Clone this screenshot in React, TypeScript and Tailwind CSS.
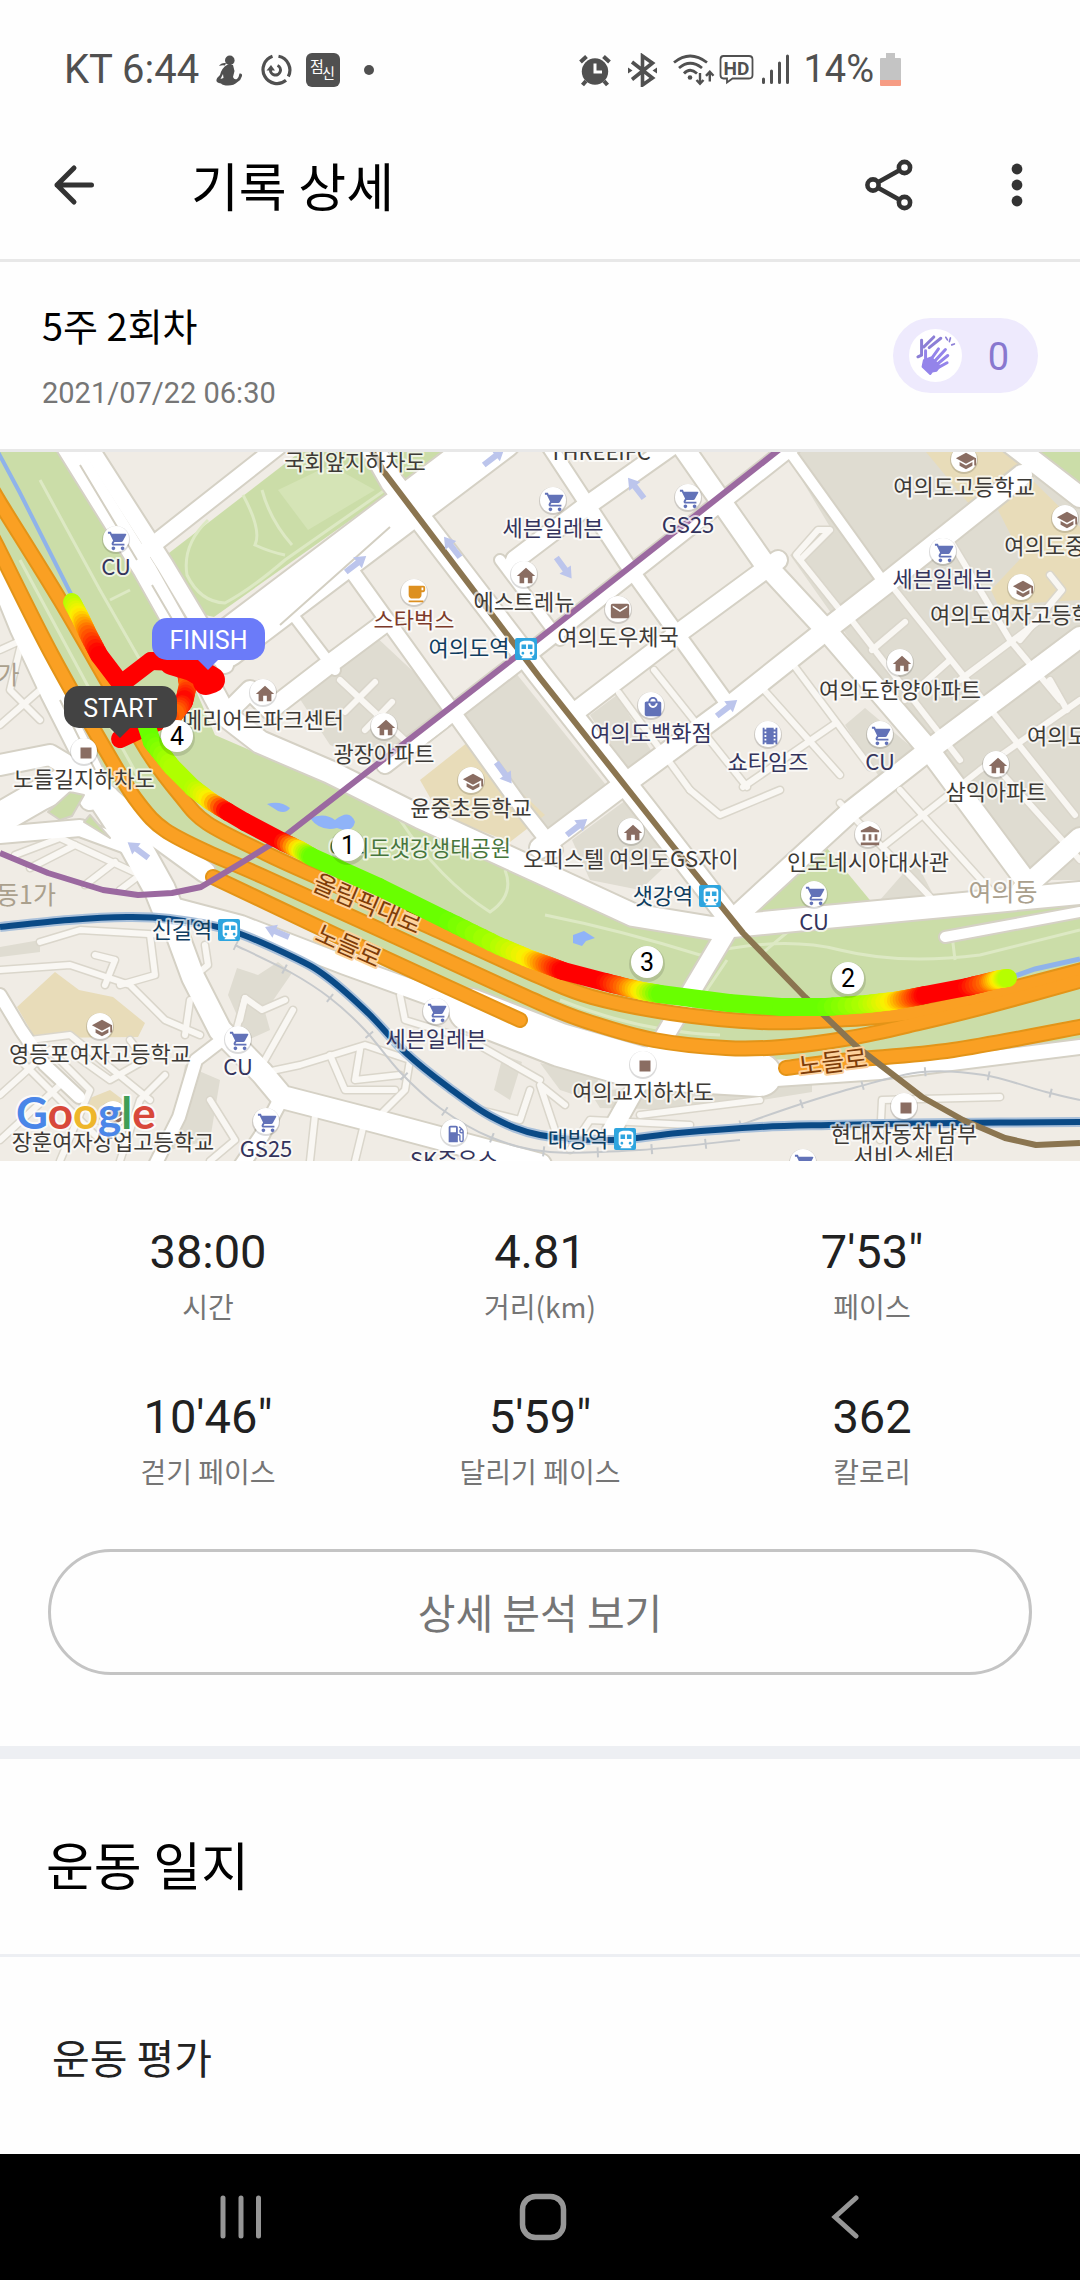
import type { ComponentType } from "react";
import {
  MdAccountBalance,
  MdDirectionsTransit,
  MdHome,
  MdLocalCafe,
  MdLocalGasStation,
  MdLocalMall,
  MdMail,
  MdSchool,
  MdShoppingCart,
  MdStop,
  MdTheaters,
} from "react-icons/md";

type Pt = [number, number];
type IconType = ComponentType<Record<string, unknown>>;

const pts = (p: Pt[]) => p.map((q) => q.join(",")).join(" ");

/* Smooth path through the given points (Catmull-Rom). */
function curve(p: Pt[]) {
  let d = `M${p[0][0]} ${p[0][1]}`;
  for (let i = 0; i < p.length - 1; i++) {
    const a = p[Math.max(i - 1, 0)];
    const b = p[i];
    const c = p[i + 1];
    const e = p[Math.min(i + 2, p.length - 1)];
    d += ` C${b[0] + (c[0] - a[0]) / 6} ${b[1] + (c[1] - a[1]) / 6} ${c[0] - (e[0] - b[0]) / 6} ${c[1] - (e[1] - b[1]) / 6} ${c[0]} ${c[1]}`;
  }
  return d;
}

/* ---------- map data ---------- */

const GREENS: Pt[][] = [
  [[0, 452], [62, 452], [150, 600], [185, 665], [215, 735], [330, 785], [540, 885], [633, 927], [712, 940], [815, 930], [1080, 905], [1080, 1040], [940, 1055], [760, 1060], [600, 1035], [420, 985], [205, 875], [110, 790], [0, 580]],
  [[169, 553], [300, 452], [441, 452], [393, 490], [214, 617], [196, 613], [172, 580]],
  [[747, 913], [826, 847], [874, 905]],
  [[1040, 452], [1080, 452], [1080, 482]],
];

/* Small lawns enclosed by the junction ramps. */
const LAWNS: Pt[][] = [
  [[48, 812], [70, 792], [84, 795], [72, 816], [60, 820]],
  [[90, 815], [110, 838], [84, 822]],
];

const GRAYS: Pt[][] = [
  [[785, 452], [1080, 452], [1080, 880], [1030, 880], [935, 760], [790, 555], [830, 527]],
  [[296, 693], [372, 633], [451, 707], [380, 765], [330, 745]],
  [[462, 716], [515, 672], [610, 790], [555, 840], [495, 760]],
  [[590, 715], [617, 695], [660, 765], [628, 775]],
  [[845, 725], [865, 708], [915, 750], [880, 778]],
  [[572, 840], [626, 800], [672, 860], [640, 890], [590, 880]],
  [[880, 900], [915, 860], [936, 900]],
  [[228, 995], [237, 968], [258, 975], [278, 962], [292, 973], [265, 1012], [270, 1030], [248, 1040]],
  [[0, 947], [40, 940], [40, 952], [0, 957]],
  [[590, 1092], [812, 1070], [812, 1092], [700, 1110], [600, 1108]],
  [[494, 1090], [503, 1055], [522, 1062], [510, 1100]],
  [[185, 1065], [220, 1080], [210, 1140], [170, 1150]],
  [[540, 1063], [600, 1075], [590, 1100], [560, 1090]],
];

const SANDS: Pt[][] = [
  [[926, 452], [1024, 452], [1022, 463], [970, 505]],
  [[998, 510], [1029, 477], [1080, 527], [1080, 600], [998, 605], [991, 590], [1022, 557]],
  [[420, 780], [468, 742], [545, 815], [510, 842], [440, 815]],
  [[17, 1007], [55, 972], [79, 990], [113, 997], [145, 1023], [138, 1037], [35, 1038]],
  [[85, 1100], [110, 1090], [130, 1105], [120, 1125], [95, 1125]],
];

const MINOR: Pt[][] = [
  [[654, 670], [747, 787]],
  [[619, 693], [690, 790]],
  [[764, 690], [840, 775]],
  [[795, 667], [870, 767]],
  [[850, 618], [960, 760]],
  [[895, 590], [1075, 815]],
  [[950, 540], [1010, 640], [1060, 700]],
  [[743, 787], [836, 723]],
  [[872, 650], [905, 622]],
  [[905, 700], [950, 660]],
  [[840, 803], [936, 903]],
  [[900, 790], [990, 890]],
  [[690, 790], [720, 815], [780, 790]],
  [[885, 845], [980, 770], [1080, 700]],
  [[960, 680], [1040, 620]],
  [[1050, 680], [1067, 710]],
  [[990, 760], [1080, 860]],
  [[800, 560], [830, 530], [818, 530], [796, 555], [840, 610]],
  [[340, 680], [410, 745]],
  [[365, 730], [392, 702]],
  [[345, 712], [375, 682]],
  [[385, 770], [445, 725]],
  [[1050, 575], [1062, 590], [1020, 640]],
  [[40, 942], [80, 930], [165, 935]],
  [[0, 970], [70, 965], [130, 985], [165, 1020], [200, 1035]],
  [[105, 985], [115, 960], [95, 955]],
  [[150, 935], [155, 975], [120, 985]],
  [[205, 945], [208, 965], [190, 980]],
  [[185, 1035], [190, 1000]],
  [[0, 1095], [50, 1050], [90, 1090], [60, 1161]],
  [[30, 1040], [70, 1035], [150, 1100]],
  [[0, 1140], [60, 1085]],
  [[75, 1055], [110, 1080], [145, 1060], [130, 1040]],
  [[20, 1060], [100, 1140]],
  [[120, 1161], [140, 1100], [165, 1075]],
  [[235, 1035], [245, 998], [262, 1010], [285, 1000]],
  [[245, 998], [240, 1020]],
  [[262, 1065], [293, 1010]],
  [[262, 1073], [300, 1065], [365, 1045], [410, 1060], [405, 1090], [380, 1115]],
  [[330, 1055], [345, 1090], [395, 1090]],
  [[360, 1050], [355, 1080], [400, 1075]],
  [[210, 1100], [235, 1140], [210, 1161]],
  [[355, 1161], [365, 1120]],
  [[310, 1161], [315, 1115]],
  [[400, 995], [405, 1020], [470, 1040], [540, 1080]],
  [[480, 1110], [520, 1120], [530, 1090]],
  [[565, 1105], [540, 1085], [555, 1130]],
  [[640, 1115], [760, 1100]],
  [[570, 1150], [590, 1120], [690, 1125]],
  [[880, 1140], [882, 1100], [1000, 1097]],
  [[15, 855], [60, 838], [140, 875], [120, 890]],
  [[30, 868], [75, 845]],
  [[85, 885], [115, 862]],
  [[0, 650], [22, 640], [10, 690], [40, 720]],
  [[0, 725], [40, 690]],
];

const ROADS: { w: number; p: Pt[] }[] = [
  { w: 22, p: [[64, 440], [145, 570], [190, 650], [225, 715], [260, 742], [330, 772], [420, 817], [540, 872], [633, 915], [712, 928], [815, 918], [1080, 893]] },
  { w: 16, p: [[85, 440], [165, 565], [225, 665]] },
  { w: 16, p: [[140, 555], [290, 437]] },
  { w: 44, p: [[225, 645], [410, 505], [500, 437]] },
  { w: 18, p: [[225, 715], [250, 690], [270, 710], [331, 663], [386, 622]] },
  { w: 10, p: [[293, 615], [335, 670]] },
  { w: 14, p: [[351, 570], [525, 812], [555, 850]] },
  { w: 18, p: [[515, 560], [585, 507], [670, 447]] },
  { w: 16, p: [[385, 765], [540, 645], [800, 440]] },
  { w: 18, p: [[575, 712], [680, 632], [778, 560]] },
  { w: 20, p: [[540, 848], [626, 783], [729, 707], [826, 630], [884, 585], [1022, 475]] },
  { w: 20, p: [[729, 923], [850, 812], [929, 750], [1080, 637]] },
  { w: 22, p: [[372, 447], [392, 482], [540, 675], [646, 810], [735, 925]] },
  { w: 14, p: [[545, 440], [626, 563], [730, 707]] },
  { w: 10, p: [[500, 560], [560, 640]] },
  { w: 20, p: [[678, 440], [764, 563], [826, 630], [929, 750], [1029, 885]] },
  { w: 10, p: [[790, 452], [884, 583]] },
  { w: 20, p: [[1000, 435], [1080, 497]] },
  { w: 20, p: [[1022, 890], [1080, 838]] },
  { w: 10, p: [[945, 937], [1080, 912]] },
  { w: 18, p: [[726, 933], [664, 1037], [612, 1130]] },
  { w: 22, p: [[0, 575], [21, 627], [52, 693], [86, 760], [105, 800], [135, 840]] },
  { w: 30, p: [[105, 800], [135, 845], [160, 890], [172, 920]] },
  { w: 22, p: [[172, 920], [193, 977], [220, 1030], [262, 1073], [282, 1097], [379, 1122], [540, 1165]] },
  { w: 20, p: [[0, 765], [50, 755], [75, 770], [90, 800]] },
  { w: 30, p: [[0, 818], [40, 795], [80, 775]] },
  { w: 16, p: [[0, 835], [80, 828], [140, 850]] },
  { w: 20, p: [[100, 790], [150, 832], [205, 872]] },
  { w: 18, p: [[165, 905], [241, 925], [345, 965], [470, 1010]] },
  { w: 42, p: [[470, 1010], [560, 1045], [640, 1068], [760, 1075]] },
  { w: 14, p: [[760, 1080], [880, 1072], [1080, 1047]] },
  { w: 12, p: [[150, 1175], [179, 1117], [196, 1060], [222, 1040]] },
  { w: 12, p: [[0, 995], [21, 1030], [45, 1065], [79, 1097]] },
  { w: 14, p: [[235, 1175], [262, 1135], [282, 1097]] },
];

const HIGHWAYS: Pt[][] = [
  [[-10, 485], [0, 503], [60, 600], [114, 693], [150, 755], [180, 795], [207, 823], [265, 853], [313, 875], [430, 927], [540, 977], [592, 997], [671, 1013], [760, 1022], [833, 1020], [919, 1012], [1005, 990], [1090, 968]],
  [[-10, 533], [0, 552], [52, 655], [115, 766], [140, 805], [165, 830], [207, 852], [262, 876], [396, 937], [540, 1003], [592, 1023], [654, 1040], [726, 1048], [781, 1047], [850, 1038], [919, 1023], [988, 1006], [1090, 978]],
  [[213, 877], [310, 923], [389, 960], [520, 1020]],
  [[786, 1068], [850, 1060], [953, 1050], [1090, 1025]],
];

const BLUE_LINE: Pt[] = [[0, 927], [69, 920], [127, 917], [170, 919], [229, 930], [293, 957], [327, 977], [368, 1013], [406, 1053], [448, 1087], [492, 1117], [540, 1135], [612, 1140], [678, 1133], [760, 1127], [829, 1125], [953, 1123], [1080, 1122]];
const PURPLE_LINE: Pt[] = [[790, 441], [540, 638], [286, 835], [241, 863], [201, 887], [172, 893], [138, 895], [103, 890], [48, 873], [0, 853]];
const BROWN_LINE: Pt[] = [[370, 447], [384, 472], [540, 678], [672, 845], [743, 933], [805, 997], [857, 1047], [922, 1097], [963, 1120], [1005, 1138], [1036, 1145], [1080, 1143]];
const RAIL: Pt[] = [[740, 1125], [798, 1105], [857, 1087], [922, 1072], [984, 1075], [1046, 1092], [1080, 1100]];
const RAIL_SOUTH: Pt[] = [[235, 945], [290, 972], [330, 998], [365, 1030], [400, 1072], [440, 1108], [490, 1137], [550, 1152], [640, 1150], [740, 1140]];

const SLOW = [255, 0, 0];
const WARM = [255, 110, 0];
const MID = [255, 240, 0];
const QUICK = [175, 255, 0];
const FAST = [105, 255, 0];

type Track = { p: Pt; c: number[] }[];
const TRACKS: Track[] = [
  [
    { p: [186, 672], c: SLOW },
    { p: [188, 685], c: WARM },
    { p: [184, 702], c: SLOW },
    { p: [174, 715], c: WARM },
    { p: [150, 725], c: SLOW },
    { p: [120, 739], c: SLOW },
  ],
  [
    { p: [72, 602], c: QUICK },
    { p: [80, 617], c: MID },
    { p: [88, 634], c: WARM },
    { p: [99, 655], c: SLOW },
    { p: [121, 684], c: SLOW },
    { p: [151, 661], c: SLOW },
    { p: [179, 662], c: SLOW },
    { p: [213, 680], c: SLOW },
    { p: [205, 678], c: SLOW },
  ],
  [
    { p: [146, 724], c: FAST },
    { p: [152, 742], c: FAST },
    { p: [172, 767], c: QUICK },
    { p: [193, 788], c: QUICK },
    { p: [210, 801], c: MID },
    { p: [228, 812], c: SLOW },
    { p: [245, 822], c: SLOW },
    { p: [283, 842], c: SLOW },
    { p: [300, 850], c: MID },
    { p: [312, 857], c: FAST },
    { p: [379, 887], c: FAST },
    { p: [448, 921], c: FAST },
    { p: [499, 946], c: QUICK },
    { p: [530, 959], c: MID },
    { p: [547, 965], c: WARM },
    { p: [563, 971], c: SLOW },
    { p: [605, 982], c: SLOW },
    { p: [625, 987], c: WARM },
    { p: [642, 991], c: MID },
    { p: [660, 994], c: FAST },
    { p: [729, 1003], c: FAST },
    { p: [781, 1007], c: FAST },
    { p: [826, 1007], c: FAST },
    { p: [867, 1004], c: QUICK },
    { p: [893, 1001], c: MID },
    { p: [910, 998], c: WARM },
    { p: [925, 995], c: SLOW },
    { p: [967, 987], c: SLOW },
    { p: [988, 982], c: WARM },
    { p: [1000, 979], c: MID },
    { p: [1008, 978], c: QUICK },
  ],
];

const ARROWS: { at: Pt; deg: number }[] = [
  { at: [356, 564], deg: -38 },
  { at: [452, 547], deg: -128 },
  { at: [494, 457], deg: -38 },
  { at: [636, 488], deg: -128 },
  { at: [564, 568], deg: 54 },
  { at: [504, 773], deg: 54 },
  { at: [727, 708], deg: -38 },
  { at: [577, 827], deg: -38 },
  { at: [138, 850], deg: -143 },
  { at: [277, 932], deg: -157 },
];

const SHOP = "#6272b8";
const PLACE = "#8a6d62";
const INK = "#3d3a36";
const SHOP_INK = "#33335c";

type Poi = { icon?: IconType; fill: string; at: Pt; text?: string; ink?: string };
const cart = (x: number, y: number, text?: string): Poi => ({ icon: MdShoppingCart as IconType, fill: SHOP, at: [x, y], text, ink: SHOP_INK });
const place = (icon: unknown, x: number, y: number, text: string): Poi => ({ icon: icon as IconType, fill: PLACE, at: [x, y], text, ink: INK });

const POIS: Poi[] = [
  cart(116, 539, "CU"),
  cart(553, 500, "세븐일레븐"),
  cart(688, 497, "GS25"),
  { icon: MdLocalCafe as IconType, fill: "#dd9020", at: [414, 592], text: "스타벅스", ink: "#7c3a2a" },
  place(MdHome, 524, 574, "에스트레뉴"),
  place(MdMail, 618, 609, "여의도우체국"),
  place(MdHome, 263, 692, "메리어트파크센터"),
  place(MdHome, 384, 726, "광장아파트"),
  place(MdSchool, 471, 780, "윤중초등학교"),
  place(MdStop, 84, 751, "노들길지하차도"),
  place(MdHome, 631, 831, "오피스텔 여의도GS자이"),
  { icon: MdLocalMall as IconType, fill: SHOP, at: [651, 705], text: "여의도백화점", ink: SHOP_INK },
  { icon: MdTheaters as IconType, fill: SHOP, at: [768, 734], text: "쇼타임즈", ink: SHOP_INK },
  cart(880, 734, "CU"),
  place(MdHome, 900, 662, "여의도한양아파트"),
  place(MdHome, 996, 764, "삼익아파트"),
  place(MdSchool, 964, 459, "여의도고등학교"),
  place(MdSchool, 1065, 518, "여의도중학교"),
  cart(943, 551, "세븐일레븐"),
  place(MdSchool, 1021, 587, "여의도여자고등학교"),
  place(MdAccountBalance, 868, 834, "인도네시아대사관"),
  cart(814, 894, "CU"),
  place(MdStop, 643, 1064, "여의교지하차도"),
  place(MdStop, 904, 1106, "현대자동차 남부"),
  cart(803, 1162),
  cart(436, 1011, "세븐일레븐"),
  cart(238, 1039, "CU"),
  cart(266, 1121, "GS25"),
  { icon: MdLocalGasStation as IconType, fill: SHOP, at: [454, 1132], text: "SK주유소", ink: SHOP_INK },
  place(MdSchool, 100, 1026, "영등포여자고등학교"),
  place(MdSchool, 113, 1114, "장훈여자상업고등학교"),
];

const STATIONS: { label: string; text: Pt; at: Pt }[] = [
  { label: "여의도역", text: [469, 656], at: [526, 649] },
  { label: "샛강역", text: [663, 904], at: [710, 896] },
  { label: "대방역", text: [578, 1147], at: [625, 1139] },
  { label: "신길역", text: [182, 938], at: [229, 930] },
];

const KM: { n: number; at: Pt }[] = [
  { n: 4, at: [177, 736] },
  { n: 1, at: [348, 845] },
  { n: 3, at: [647, 962] },
  { n: 2, at: [848, 978] },
];

/* ---------- map drawing ---------- */

function TrackLine({ track }: { track: Track }) {
  const parts: { a: Pt; b: Pt; color: string }[] = [];
  for (let i = 0; i < track.length - 1; i++) {
    const s = track[i];
    const e = track[i + 1];
    const n = s.c === e.c ? 1 : 6;
    for (let k = 0; k < n; k++) {
      const at = (t: number): Pt => [s.p[0] + (e.p[0] - s.p[0]) * t, s.p[1] + (e.p[1] - s.p[1]) * t];
      const m = (k + 0.5) / n;
      const rgb = s.c.map((v, j) => Math.round(v + (e.c[j] - v) * m));
      parts.push({ a: at(k / n), b: at((k + 1) / n), color: `rgb(${rgb.join(",")})` });
    }
  }
  return (
    <g strokeWidth="18" strokeLinecap="round">
      {parts.map((q, i) => (
        <line key={i} x1={q.a[0]} y1={q.a[1]} x2={q.b[0]} y2={q.b[1]} stroke={q.color} />
      ))}
    </g>
  );
}

function MapLabel({ x, y, ink, anchor = "middle", children }: { x: number; y: number; ink: string; anchor?: "middle" | "start"; children: string }) {
  return (
    <text x={x} y={y} textAnchor={anchor} fill={ink} stroke="#ffffff" strokeOpacity="0.7" strokeWidth="4" strokeLinejoin="round" paintOrder="stroke">
      {children}
    </text>
  );
}

function RoadName({ x, y, deg, children }: { x: number; y: number; deg: number; children: string }) {
  return (
    <text x={x} y={y} transform={`rotate(${deg} ${x} ${y})`} textAnchor="middle" fontSize="25" fill="#7f3d08" stroke="#fdd29c" strokeWidth="4" strokeLinejoin="round" paintOrder="stroke">
      {children}
    </text>
  );
}

function Callout({ x, y, w, fill, tip, children }: { x: number; y: number; w: number; fill: string; tip: number; children: string }) {
  return (
    <g>
      <rect x={x} y={y} width={w} height="42" rx="15" fill={fill} />
      <path d={`M${tip - 11} ${y + 41} L${tip} ${y + 52} L${tip + 11} ${y + 41} Z`} fill={fill} />
      <text x={x + w / 2} y={y + 31} textAnchor="middle" fontSize="25" fill="#fff">
        {children}
      </text>
    </g>
  );
}

function RouteMap() {
  return (
    <svg viewBox="0 452 1080 709" className="block w-full" role="img" aria-label="운동 경로 지도" fontFamily="'Noto Sans CJK KR', sans-serif" fontSize="22">
      <rect x="0" y="452" width="1080" height="709" fill="#f0ece5" />
      {GRAYS.map((p, i) => (
        <polygon key={i} points={pts(p)} fill="#dfdcd1" />
      ))}
      {SANDS.map((p, i) => (
        <polygon key={i} points={pts(p)} fill="#e8dcb9" />
      ))}
      {GREENS.map((p, i) => (
        <polygon key={i} points={pts(p)} fill="#cbdda8" />
      ))}

      <g fill="none" stroke="#dde9c4" strokeWidth="3">
        <path d="M208 520 Q182 545 187 575 Q200 602 225 603 Q250 590 285 560 L385 490" />
        <path d="M243 495 Q262 530 255 545 Q270 552 285 555 M262 490 Q270 520 292 545" />
        <path d="M40 480 L100 590 L140 660 M110 600 L130 590" />
        <path d="M20 560 L90 690 L140 780 M400 820 Q440 880 490 912 Q515 895 505 870" />
        <path d="M545 915 Q620 930 700 955 Q780 935 840 950 Q900 965 980 955 L1080 930" />
        <path d="M727 960 L700 1000 M760 955 L790 930 M952 935 L955 960" />
        <path d="M560 1000 Q640 1032 720 1035" />
      </g>
      <polygon points="278,490 330,465 375,490 308,530" fill="#d5e4b6" />
      <g fill="#8fb3f8">
        <path d="M267 804 Q280 800 290 808 Q286 814 278 811 Z" />
        <path d="M310 818 Q325 812 335 820 Q350 808 355 822 Q352 834 337 828 Q320 832 310 818 Z" />
        <path d="M573 935 L584 931 L595 938 L586 941 L582 946 L573 943 Z" />
      </g>
      <path d="M-2 452 L20 493 L74 600" stroke="#8fb3ea" strokeWidth="4" fill="none" />
      <path d="M1012 977 L1035 969 L1080 959" stroke="#8fb3ea" strokeWidth="5" fill="none" />

      <g fill="none" strokeLinejoin="round" strokeLinecap="round">
        <g stroke="#dad6cb" strokeWidth="9">
          {MINOR.map((p, i) => (
            <polyline key={i} points={pts(p)} />
          ))}
        </g>
        {ROADS.map((r, i) => (
          <polyline key={i} points={pts(r.p)} stroke="#d5d1c5" strokeWidth={r.w + 4} />
        ))}
        <g stroke="#f9f7f3" strokeWidth="6">
          {MINOR.map((p, i) => (
            <polyline key={i} points={pts(p)} />
          ))}
        </g>
        {ROADS.map((r, i) => (
          <polyline key={i} points={pts(r.p)} stroke="#ffffff" strokeWidth={r.w} />
        ))}
      </g>
      {LAWNS.map((p, i) => (
        <polygon key={i} points={pts(p)} fill="#cbdda8" stroke="#d5d1c5" strokeWidth="2" strokeLinejoin="round" />
      ))}
      <g stroke="#d3cfc2" strokeWidth="2" fill="none">
        <path d="M80 465 L137 560 M152 585 L190 650 M280 625 L390 527 M60 700 L95 770" />
      </g>

      <g fill="none" stroke="#c6c9cc">
        <path d={curve(RAIL)} strokeWidth="2" />
        <path d={curve(RAIL)} strokeWidth="9" strokeDasharray="2 62" />
        <path d={curve(RAIL_SOUTH)} strokeWidth="2" />
        <path d={curve(RAIL_SOUTH)} strokeWidth="10" strokeDasharray="2 52" />
      </g>

      <g fill="none" strokeLinecap="round">
        {HIGHWAYS.map((p, i) => (
          <path key={i} d={curve(p)} stroke="#e39418" strokeWidth="16" />
        ))}
        {HIGHWAYS.map((p, i) => (
          <path key={i} d={curve(p)} stroke="#faa023" strokeWidth="12" />
        ))}
      </g>

      <path d={curve(BLUE_LINE)} fill="none" stroke="#a9c0da" strokeWidth="10" />
      <path d={curve(BLUE_LINE)} fill="none" stroke="#0a4a86" strokeWidth="6" />
      <polyline points={pts(PURPLE_LINE)} fill="none" stroke="#9b69a0" strokeWidth="6" strokeLinejoin="round" />
      <polyline points={pts(BROWN_LINE)} fill="none" stroke="#8b7550" strokeWidth="6" strokeLinejoin="round" />

      {ARROWS.map((a, i) => (
        <path key={i} d="M-13 -3 H2 V-7 L13 0 L2 7 V3 H-13 Z" fill="#bcc5ec" transform={`translate(${a.at[0]} ${a.at[1]}) rotate(${a.deg})`} />
      ))}

      <RoadName x={364} y={912} deg={23}>올림픽대로</RoadName>
      <RoadName x={345} y={954} deg={24}>노들로</RoadName>
      <RoadName x={834} y={1071} deg={-7}>노들로</RoadName>

      <g fontSize="25" fill="#aaa08d">
        <text x="8" y="684" textAnchor="middle">가</text>
        <text x="26" y="904" textAnchor="middle">동1가</text>
        <text x="1003" y="901" textAnchor="middle" stroke="#fff" strokeWidth="4" strokeOpacity="0.8" paintOrder="stroke">여의동</text>
      </g>

      {POIS.map((p, i) => {
        const Icon = p.icon!;
        return (
          <g key={i}>
            <circle cx={p.at[0]} cy={p.at[1] + 1} r="14" fill="#000" opacity="0.14" />
            <circle cx={p.at[0]} cy={p.at[1]} r="13" fill="#fff" />
            <Icon x={p.at[0] - 9} y={p.at[1] - 9} width={18} height={18} color={p.fill} />
          </g>
        );
      })}
      {POIS.filter((p) => p.text).map((p, i) => (
        <MapLabel key={i} x={p.at[0]} y={p.at[1] + 36} ink={p.ink!}>
          {p.text!}
        </MapLabel>
      ))}
      <MapLabel x={904} y={1164} ink={INK}>서비스센터</MapLabel>
      <MapLabel x={355} y={470} ink={INK}>국회앞지하차도</MapLabel>
      <MapLabel x={600} y={460} ink={INK}>THREEIFC</MapLabel>
      <MapLabel x={1027} y={744} ink={INK} anchor="start">여의도</MapLabel>
      <MapLabel x={420} y={856} ink="#47763c">여의도샛강생태공원</MapLabel>

      {STATIONS.map((s) => (
        <g key={s.label}>
          <MapLabel x={s.text[0]} y={s.text[1]} ink="#0f3d5f">
            {s.label}
          </MapLabel>
          <rect x={s.at[0] - 11} y={s.at[1] - 11} width="22" height="22" rx="2" fill="#2ea5df" />
          <MdDirectionsTransit x={s.at[0] - 10} y={s.at[1] - 10} width={20} height={20} color="#fff" />
        </g>
      ))}

      {TRACKS.map((t, i) => (
        <TrackLine key={i} track={t} />
      ))}
      <path d="M172 662 L192 668 L212 680 L206 682" fill="none" stroke="#ff0000" strokeWidth="26" strokeLinecap="round" strokeLinejoin="round" />

      <g fontFamily="Roboto, sans-serif">
        {KM.map((k) => (
          <g key={k.n}>
            <circle cx={k.at[0]} cy={k.at[1] + 2} r="18" fill="#000" opacity="0.12" />
            <circle cx={k.at[0]} cy={k.at[1]} r="16" fill="#fff" />
            <text x={k.at[0]} y={k.at[1] + 9} textAnchor="middle" fontSize="25" fill="#000">
              {k.n}
            </text>
          </g>
        ))}
        <Callout x={64} y={686} w={113} fill="#434343" tip={120}>START</Callout>
        <Callout x={152} y={618} w={113} fill="#6b7bf9" tip={208}>FINISH</Callout>
      </g>

      <text x="16" y="1129" fontFamily="Lato, sans-serif" fontWeight="700" fontSize="44" stroke="#fff" strokeWidth="4" strokeOpacity="0.8" strokeLinejoin="round" paintOrder="stroke">
        <tspan fill="#4a86e8">G</tspan>
        <tspan fill="#d8483b">o</tspan>
        <tspan fill="#eeb62b">o</tspan>
        <tspan fill="#4a86e8">g</tspan>
        <tspan fill="#3f9e57">l</tspan>
        <tspan fill="#d8483b">e</tspan>
      </text>
    </svg>
  );
}

/* ---------- status bar ---------- */

function StatusBar() {
  return (
    <div className="flex items-center justify-between pt-11 pr-[178px] pb-4 pl-16 font-[Roboto,sans-serif] text-[40px] leading-[51px] text-[#505050]">
      <div className="flex items-center">
        <span>KT 6:44</span>
        <svg viewBox="217 53 28 32" className="ml-4 h-8 w-7" fill="currentColor" aria-hidden="true">
          <circle cx="231.8" cy="59.4" r="4.8" />
          <path d="M229 64 H235 L236.5 70 L235 76 Q236 79 239 78 Q241 76 241.5 72.5 Q244.5 72 244 75 Q243 79 239.5 81 Q236 84.5 230 84.5 Q225 84.5 223 82.5 Q218 81.5 218.4 79 Q219 76.500 222 74 Q224 66.500 229 64 Z" />
          <path d="M225 73 L222.500 78 L225.500 77 Z" fill="#fff" />
          <path d="M221 65 Q223 61.500 228 62 L227 64.500 Q224 64 221 65 Z" />
        </svg>
        <svg viewBox="261 52 33 34" className="ml-4 h-[34px] w-[33px]" fill="none" stroke="currentColor" aria-hidden="true">
          <path d="M274.500 55.300 A14 14 0 1 0 288 79.300 M280.500 55.300 A14 14 0 0 1 290.300 75.500" strokeWidth="3.200" />
          <path d="M279.500 64.500 A5 5 0 1 1 272.500 68.500" strokeWidth="3" />
          <path d="M268.500 69.500 L273 64 L277 69.500 Z" fill="currentColor" stroke="none" />
        </svg>
        <svg viewBox="0 0 34 34" className="ml-3.5 h-[34px] w-[34px]" aria-hidden="true">
          <rect width="34" height="34" rx="6" fill="currentColor" />
          <text x="4" y="19" fontFamily="'Noto Sans CJK KR', sans-serif" fontSize="15" fill="#fff">점</text>
          <text x="16" y="25" fontFamily="'Noto Sans CJK KR', sans-serif" fontSize="14" fill="#fff">신</text>
        </svg>
        <span className="ml-6 size-2.5 rounded-full bg-current" />
      </div>

      <div className="flex items-center">
        <svg viewBox="580 52 32 34" className="h-[34px] w-8" fill="none" stroke="currentColor" strokeWidth="4" aria-hidden="true">
          <circle cx="596" cy="70.500" r="13.200" fill="currentColor" stroke="none" />
          <path d="M581.500 61 L587.500 55.500 M610.500 61 L604.500 55.500" />
          <path d="M587 80 L583.500 84 M605 80 L608.500 84" />
          <path d="M596 62.500 V71 H603" stroke="#fff" strokeWidth="3" />
        </svg>
        <svg viewBox="627 52 31 34" className="ml-4 h-[34px] w-[31px]" fill="none" stroke="currentColor" strokeWidth="3.600" aria-hidden="true">
          <path d="M632 61 L652.500 77 L642.500 84 V55 L652.500 62 L632 78.500" />
          <path d="M628 66.500 L632.500 69.500 L628 72.500 Z M657 66.500 L652.500 69.500 L657 72.500 Z" fill="currentColor" stroke="none" />
        </svg>
        <svg viewBox="671 52 43 34" className="ml-3.5 h-[34px] w-[43px]" fill="none" stroke="currentColor" strokeWidth="2.800" aria-hidden="true">
          <path d="M673 61.500 Q689 48.500 706 61.500 M678 67 Q689 57.500 701 67 M683 72.500 Q689 66 696 72.500" />
          <circle cx="689" cy="76.500" r="2.300" fill="currentColor" stroke="none" />
          <path d="M699 72 V82 M695.500 79 L699 82.800 L702.500 79 M708.800 80.500 V71 M705 74.800 L708.800 70.800 L712.500 74.800" strokeWidth="2.400" />
        </svg>
        <svg viewBox="718 55 36 31" className="ml-1 h-[31px] w-9" aria-hidden="true">
          <path d="M722.500 57 H748 Q751.500 57 751.500 60.500 V76 Q751.500 79.500 748 79.500 H731.500 L726 83.500 V79.500 H722.500 Q719.500 79.500 719.500 76 V60.500 Q719.500 57 722.500 57 Z" fill="none" stroke="currentColor" strokeWidth="1.800" />
          <text x="735.500" y="75.500" textAnchor="middle" fontFamily="Roboto, sans-serif" fontWeight="700" fontSize="19" fill="currentColor">HD</text>
        </svg>
        <svg viewBox="760 54 30 31" className="ml-1.5 h-[31px] w-[30px]" stroke="currentColor" strokeWidth="3" strokeLinecap="round" aria-hidden="true">
          <path d="M762.500 79 V82.500 M770.500 71 V82.500 M778.500 63 V82.500 M786.500 56 V82.500" />
        </svg>
        <span className="ml-3 text-[38px]">14%</span>
        <svg viewBox="0 0 22 34" className="ml-1.5 h-[34px] w-[22px]" aria-hidden="true">
          <path d="M6 0 H15 V5 H20 Q21 5 21 6 V27 H0 V6 Q0 5 1 5 H6 Z" fill="#c4c4c4" />
          <path d="M0 27 H21 V32 Q21 33 20 33 H1 Q0 33 0 32 Z" fill="#f69c84" />
        </svg>
      </div>
    </div>
  );
}

function AppBar() {
  return (
    <header className="flex items-center border-b-3 border-[#e8e8e8] pr-[21px] pl-8 py-8 text-[#333]">
      <button type="button" aria-label="뒤로" className="grid size-[84px] place-items-center">
        <svg viewBox="0 0 42 42" className="size-[42px]" fill="none" stroke="currentColor" strokeWidth="5" strokeLinecap="round" strokeLinejoin="round" aria-hidden="true">
          <path d="M21 4 L4 21 L21 38 M4 21 H38.500" />
        </svg>
      </button>
      <h1 className="ml-[75px] flex-1 text-[52px] leading-[60px] font-normal text-black">기록 상세</h1>
      <button type="button" aria-label="공유" className="grid size-[84px] place-items-center">
        <svg viewBox="0 0 48 52" className="h-[52px] w-12" fill="none" stroke="currentColor" strokeWidth="4.600" aria-hidden="true">
          <circle cx="8" cy="26" r="5.600" />
          <circle cx="39.500" cy="8.500" r="5.600" />
          <circle cx="39.500" cy="43.500" r="5.600" />
          <path d="M13 23.300 L34.500 11.300 M13 28.700 L34.500 40.700" />
        </svg>
      </button>
      <button type="button" aria-label="더보기" className="ml-11 grid size-[84px] place-items-center">
        <svg viewBox="0 0 12 44" className="h-11 w-3" fill="currentColor" aria-hidden="true">
          <circle cx="6" cy="6" r="5.400" />
          <circle cx="6" cy="22" r="5.400" />
          <circle cx="6" cy="38" r="5.400" />
        </svg>
      </button>
    </header>
  );
}

function ClapIcon() {
  return (
    <svg viewBox="147 86 160 160" className="size-[53px] rounded-full bg-white" fill="none" strokeLinecap="round" strokeLinejoin="round" aria-hidden="true">
      <g stroke="#8c7fd6" strokeWidth="9">
        <path d="M185 120 V165 L174 170 M192 140 L222 110 M208 142 L243 114" />
        <path d="M258 111 L263 119 M272 113 L269 124 M284 131 L276 134" strokeWidth="5" />
      </g>
      <g stroke="#ffffff" strokeWidth="13">
        <path d="M197 152 V185 M210 182 L236 146 M222 186 L257 148 M230 194 L264 166 M232 204 L262 188" />
      </g>
      <g stroke="#9484ea" strokeWidth="9">
        <path d="M197 152 V185 M210 182 L236 146 M222 186 L257 148 M230 194 L264 166 M232 204 L262 188" />
        <path d="M192 180 L214 172 L240 198 L230 212 L217 214 L211 222 L188 200 Z" fill="#9484ea" strokeWidth="6" />
      </g>
    </svg>
  );
}

const STATS = [
  { value: "38:00", label: "시간" },
  { value: "4.81", label: "거리(km)" },
  { value: "7'53\"", label: "페이스" },
  { value: "10'46\"", label: "걷기 페이스" },
  { value: "5'59\"", label: "달리기 페이스" },
  { value: "362", label: "칼로리" },
];

export default function App() {
  return (
    <div className="flex min-h-screen flex-col bg-[#fefefe] font-['Noto_Sans_CJK_KR',sans-serif] text-black">
      <StatusBar />
      <AppBar />

      <main className="flex flex-1 flex-col">
        <section className="flex items-center justify-between border-b-3 border-[#e8e8e8] px-[42px] pt-[35px] pb-9">
          <div>
            <h2 className="text-[38px] leading-[56px] font-normal">5주 2회차</h2>
            <time dateTime="2021-07-22T06:30" className="mt-5 block font-[Roboto,sans-serif] text-[29px] leading-10 text-[#767676]">
              2021/07/22 06:30
            </time>
          </div>
          <button type="button" aria-label="박수 0" className="flex items-center gap-[26px] rounded-full bg-[#eeeafd] py-[11px] pr-[29px] pl-4">
            <ClapIcon />
            <span className="pt-1 font-[Roboto,sans-serif] text-[38px] leading-[49px] text-[#8878cf]">0</span>
          </button>
        </section>

        <RouteMap />

        <section className="px-[42px] pt-[63px] pb-[71px]">
          <dl className="grid grid-cols-3 gap-y-[63px] text-center">
            {STATS.map((s) => (
              <div key={s.label} className="flex flex-col-reverse gap-1.5">
                <dt className="text-[28px] leading-10 text-[#757575]">{s.label}</dt>
                <dd className="font-[Roboto,sans-serif] text-[47px] leading-[56px] text-[#212121]">{s.value}</dd>
              </div>
            ))}
          </dl>
          <div className="mt-[58px] px-1.5">
            <button type="button" className="w-full rounded-full border-3 border-[#c4c4c4] pt-[29px] pb-[31px] text-[41px] leading-[60px] text-[#757575]">
              상세 분석 보기
            </button>
          </div>
        </section>

        <section className="border-t-[13px] border-[#edeff3]">
          <h2 className="border-b-3 border-[#edeff3] px-[46px] pt-[75px] pb-[60px] text-[52px] leading-[60px] font-normal">운동 일지</h2>
          <h3 className="px-[52px] pt-[69px] pb-[68px] text-[41px] leading-[60px] text-[#222]">운동 평가</h3>
        </section>
      </main>

      <nav className="grid grid-cols-[1fr_84px_218px_84px_218px_84px_1fr] items-center bg-black py-[21px] pl-1.5 text-[#969696]">
        <button type="button" aria-label="최근 앱" className="col-start-2 grid h-[84px] place-items-center">
          <svg viewBox="0 0 42 44" className="h-11 w-[42px]" stroke="currentColor" strokeWidth="5" strokeLinecap="round" aria-hidden="true">
            <path d="M3 3 V41 M21 3 V41 M38.500 3 V41" />
          </svg>
        </button>
        <button type="button" aria-label="홈" className="col-start-4 grid h-[84px] place-items-center">
          <svg viewBox="0 0 48 48" className="size-12" fill="none" stroke="currentColor" strokeWidth="5.500" aria-hidden="true">
            <rect x="3.500" y="3.500" width="41" height="41" rx="13" />
          </svg>
        </button>
        <button type="button" aria-label="뒤로 가기" className="col-start-6 grid h-[84px] place-items-center">
          <svg viewBox="0 0 28 44" className="h-11 w-7" fill="none" stroke="currentColor" strokeWidth="5" strokeLinecap="round" aria-hidden="true">
            <path d="M25 3 L4 22 L25 41" />
          </svg>
        </button>
      </nav>
    </div>
  );
}
